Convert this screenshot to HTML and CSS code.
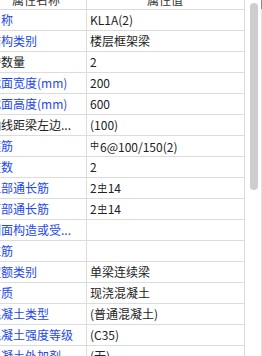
FILE: index.html
```html
<!DOCTYPE html>
<html lang="zh-CN">
<head>
    <meta charset="UTF-8">
    <title>属性编辑</title>
    <link rel="stylesheet" href="styles.css">
</head>
<body>
    <div class="panel">
        <div class="grid">
            <div class="row head">
                <div class="cell name">属性名称</div>
                <div class="cell value">属性值</div>
            </div>
            <div class="row">
                <div class="cell name">名称</div>
                <div class="cell value">KL1A(2)</div>
            </div>
            <div class="row">
                <div class="cell name">结构类别</div>
                <div class="cell value">楼层框架梁</div>
            </div>
            <div class="row private">
                <div class="cell name">跨数量</div>
                <div class="cell value">2</div>
            </div>
            <div class="row">
                <div class="cell name">截面宽度(mm)</div>
                <div class="cell value">200</div>
            </div>
            <div class="row">
                <div class="cell name">截面高度(mm)</div>
                <div class="cell value">600</div>
            </div>
            <div class="row private">
                <div class="cell name">轴线距梁左边...</div>
                <div class="cell value">(100)</div>
            </div>
            <div class="row">
                <div class="cell name">箍筋</div>
                <div class="cell value"><span class="steel-a">中</span>6@100/150(2)</div>
            </div>
            <div class="row">
                <div class="cell name">肢数</div>
                <div class="cell value">2</div>
            </div>
            <div class="row">
                <div class="cell name">上部通长筋</div>
                <div class="cell value">2<span class="steel-c">中</span>14</div>
            </div>
            <div class="row">
                <div class="cell name">下部通长筋</div>
                <div class="cell value">2<span class="steel-c">中</span>14</div>
            </div>
            <div class="row">
                <div class="cell name">侧面构造或受...</div>
                <div class="cell value"></div>
            </div>
            <div class="row">
                <div class="cell name">拉筋</div>
                <div class="cell value"></div>
            </div>
            <div class="row">
                <div class="cell name">定额类别</div>
                <div class="cell value">单梁连续梁</div>
            </div>
            <div class="row">
                <div class="cell name">材质</div>
                <div class="cell value">现浇混凝土</div>
            </div>
            <div class="row">
                <div class="cell name">混凝土类型</div>
                <div class="cell value">(普通混凝土)</div>
            </div>
            <div class="row">
                <div class="cell name">混凝土强度等级</div>
                <div class="cell value">(C35)</div>
            </div>
            <div class="row">
                <div class="cell name">混凝土外加剂</div>
                <div class="cell value">(无)</div>
            </div>
        </div>
        <div class="scrollbar">
            <div class="thumb"></div>
        </div>
    </div>
</body>
</html>
```

FILE: styles.css
```css
body {
    margin: 0;
    background: #fff;
    font-family: "Noto Sans CJK SC", "Microsoft YaHei", sans-serif;
    font-size: 12px;
    color: #222;
}
.panel {
    display: flex;
    height: 356px;
    overflow: hidden;
}
.grid {
    flex: none;
    width: 258px;
    margin-left: -14px;
    border-right: 1px solid #dcdcdc;
}
.row {
    display: grid;
    grid-template-columns: 101px 156px;
    height: 21px;
    box-sizing: border-box;
    border-bottom: 1px solid #dcdcdc;
}
.row.head {
    margin-top: -11px;
}
.cell {
    line-height: 20px;
    white-space: nowrap;
    overflow: hidden;
}
.cell.name {
    padding-left: 3px;
    border-right: 1px solid #dcdcdc;
    color: #2448e8;
}
.row.private .cell.name {
    color: #222;
}
.cell.value {
    padding-left: 3px;
}
.row.head .cell {
    color: #333;
    text-align: center;
    padding-left: 0;
    padding-top: 2px;
    line-height: 18px;
}
.steel-a {
    font-size: 9px;
    vertical-align: 3px;
    margin-right: 1px;
}
.steel-c {
    display: inline-block;
    font-size: 9px;
    line-height: 9px;
    vertical-align: 2px;
    border-bottom: 1px solid #222;
    margin: 0 1px;
}
.scrollbar {
    flex: none;
    width: 17px;
    box-sizing: border-box;
    padding: 3px 0 0 5px;
    background: linear-gradient(#8a8a8a, #8a8a8a) no-repeat right top / 1px 9px,
                linear-gradient(#e2e2e2, #e2e2e2) no-repeat right top / 1px 100%;
}
.thumb {
    width: 8px;
    height: 187px;
    border-radius: 4px;
    background: #cdcdcd;
}
```
